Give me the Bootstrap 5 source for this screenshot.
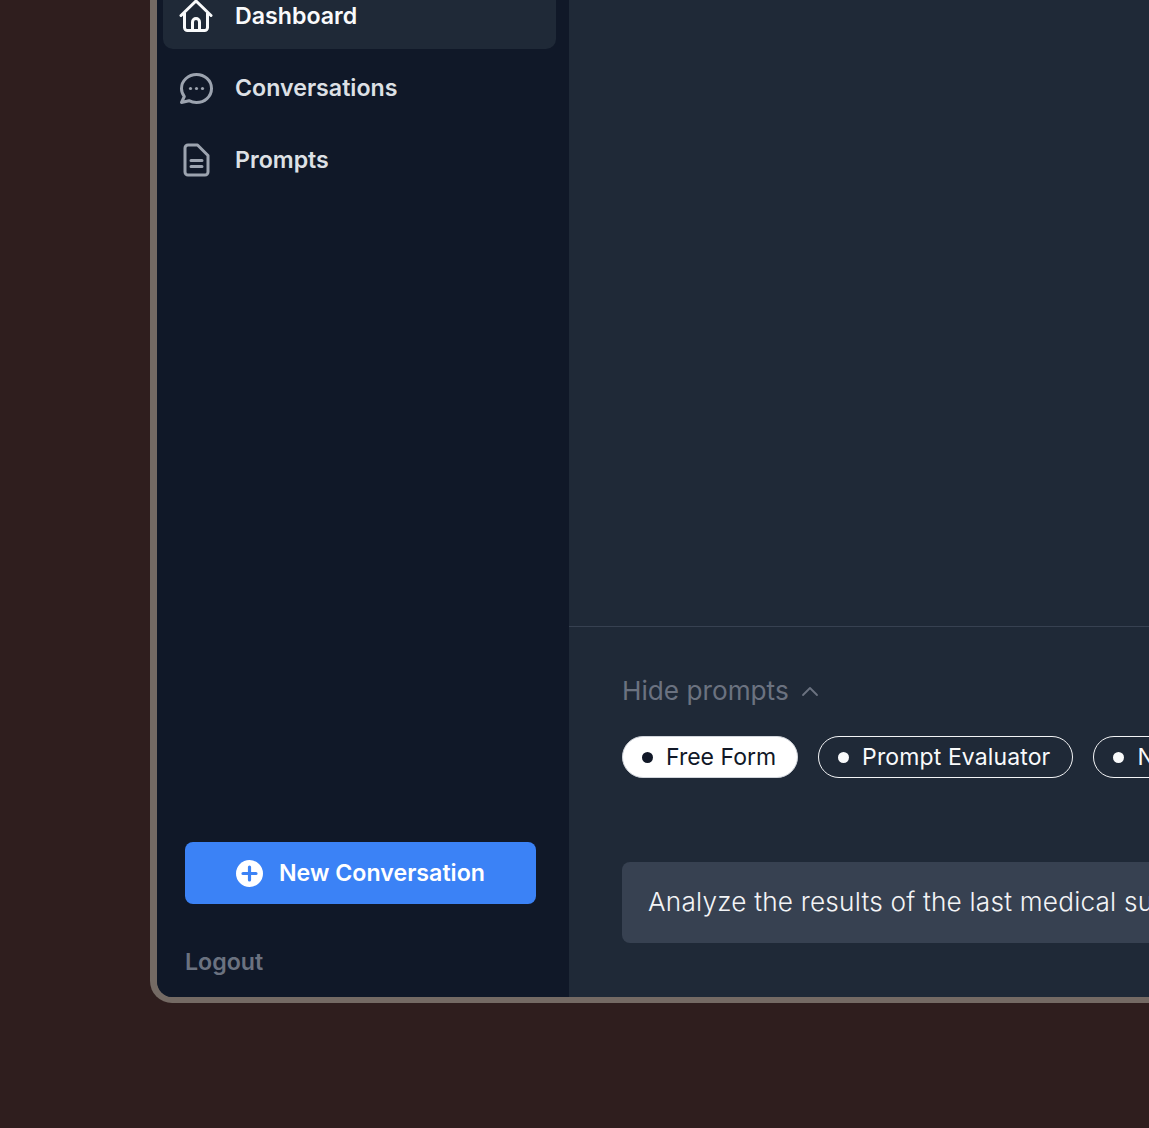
<!DOCTYPE html>
<html lang="en">
<head>
<meta charset="utf-8">
<title>Dashboard</title>
<link rel="stylesheet" href="https://cdn.jsdelivr.net/npm/bootstrap@5.3.0/dist/css/bootstrap.min.css">
<style>
html,body{height:100%;margin:0;overflow:hidden;}
body{background:#2f1e1e;font-family:Inter,"Liberation Sans",sans-serif;}
.stage{width:100%;height:1128px;overflow:hidden;background:#2f1e1e;padding-left:150px;}
.frame{width:1100px;height:1003px;display:flex;background:#1f2937;border:solid #746a64;border-width:0 0 6px 7px;border-bottom-left-radius:22px;overflow:hidden;}
.side{width:412px;flex:none;background:#101828;display:flex;flex-direction:column;height:100%;}
.navlist{padding:0 13px 0 6px;margin-top:-17px;display:flex;flex-direction:column;gap:6px;}
.navrow{display:flex;align-items:center;height:66px;padding-left:16px;gap:22px;font-size:23.2px;font-weight:600;color:#dde0e5;border-radius:10px;text-decoration:none;}
.navrow svg{flex:none;width:34px;height:34px;}
.navrow.on{background:#1f2937;color:#f9fafb;}
.sidefoot{margin-top:auto;padding:0 33px 0 28px;}
.newbtn{width:100%;height:62px;background:#3b82f6;border:0;border-radius:8px;color:#fff;font-size:23.2px;font-weight:600;gap:16px;}
.newbtn svg{width:27px;height:27px;flex:none;}
.logout{display:block;font-size:23.2px;font-weight:600;color:#6b7280;text-decoration:none;line-height:27px;margin-top:45px;margin-bottom:21px;}
.mainpane{flex:1;display:flex;flex-direction:column;min-width:0;}
.canvasarea{height:627px;flex:none;border-bottom:1px solid #374151;}
.promptarea{padding:48px 0 0 53px;overflow:hidden;}
.hidelink{color:#6b7280;font-size:26.2px;line-height:32px;font-weight:400;gap:12px;}
.hidelink svg{width:18px;height:18px;}
.pillrow{display:flex;gap:20px;margin-top:29px;white-space:nowrap;}
.pilltag{display:inline-flex;flex:none;align-items:center;height:42px;border:1.5px solid #f3f4f6;border-radius:21px;padding:0 21px 0 19px;gap:13px;color:#f9fafb;font-size:23px;line-height:1;}
.pilltag i{width:11px;height:11px;border-radius:50%;background:#f9fafb;flex:none;}
.pilltag.on{background:#fff;color:#111827;border-color:#d1d5db;}
.pilltag.on i{background:#111827;}
.pilltag.wide{letter-spacing:.12px;padding-right:22px;}
.askbox{margin-top:84px;width:600px;height:81px;background:#374151;border-radius:8px 0 0 8px;padding:0 0 2px 26px;color:#f3f4f6;font-size:26.2px;font-weight:300;letter-spacing:.2px;display:flex;align-items:center;white-space:nowrap;overflow:hidden;}
</style>
</head>
<body>
<div class="stage">
  <div class="frame">
    <aside class="side">
      <nav class="navlist">
        <a class="navrow on" href="#">
          <svg viewBox="0 0 34 34" fill="none" stroke="#f9fafb" stroke-width="3" stroke-linecap="round" stroke-linejoin="round"><path d="M2 16.500 17 2l15 14.500M5.500 14v14.500a3 3 0 0 0 3 3h17a3 3 0 0 0 3-3V14"/><path d="M13.500 31v-8a3.500 3.500 0 0 1 7 0v8"/></svg>
          <span>Dashboard</span>
        </a>
        <a class="navrow" href="#">
          <svg viewBox="0 -1 34 34" fill="none" stroke="#9ca3af" stroke-width="3" stroke-linecap="round" stroke-linejoin="round"><path d="M17.500 2.500C9.500 2.500 2.500 8.500 2.500 16.500c0 3 1 5.800 2.800 8L2.500 30.500l7.500-1.800a15.800 15.800 0 0 0 7.500 1.800c8 0 15-5.800 15-14S25.500 2.500 17.500 2.500Z"/><g fill="#9ca3af" stroke="none"><circle cx="11.500" cy="16.500" r="1.600"/><circle cx="17.500" cy="16.500" r="1.600"/><circle cx="23.500" cy="16.500" r="1.600"/></g></svg>
          <span>Conversations</span>
        </a>
        <a class="navrow" href="#">
          <svg viewBox="0 0 34 34" fill="none" stroke="#9ca3af" stroke-width="3" stroke-linecap="round" stroke-linejoin="round"><path d="M9 2h9.500L29 12.500V29a3 3 0 0 1-3 3H9a3 3 0 0 1-3-3V5a3 3 0 0 1 3-3Z"/><path d="M12 17.500h11M12 23.500h11"/></svg>
          <span>Prompts</span>
        </a>
      </nav>
      <div class="sidefoot">
        <button class="btn newbtn d-flex align-items-center justify-content-center" type="button">
          <svg viewBox="0 0 27 27"><circle cx="13.500" cy="13.500" r="13.500" fill="#fff"/><path d="M13.500 7v13M7 13.500h13" stroke="#3b82f6" stroke-width="3.200" stroke-linecap="round"/></svg>
          <span>New Conversation</span>
        </button>
        <a class="logout" href="#">Logout</a>
      </div>
    </aside>
    <main class="mainpane">
      <div class="canvasarea"></div>
      <section class="promptarea">
        <div class="hidelink d-flex align-items-center">
          <span>Hide prompts</span>
          <svg viewBox="0 0 18 18" fill="none" stroke="#6b7280" stroke-width="1.800" stroke-linecap="round" stroke-linejoin="round"><path d="M2 13 9 6l7 7"/></svg>
        </div>
        <div class="pillrow">
          <span class="pilltag on"><i></i>Free Form</span>
          <span class="pilltag wide"><i></i>Prompt Evaluator</span>
          <span class="pilltag"><i></i>New Prompt</span>
        </div>
        <div class="askbox">Analyze the results of the last medical survey</div>
      </section>
    </main>
  </div>
</div>
</body>
</html>
